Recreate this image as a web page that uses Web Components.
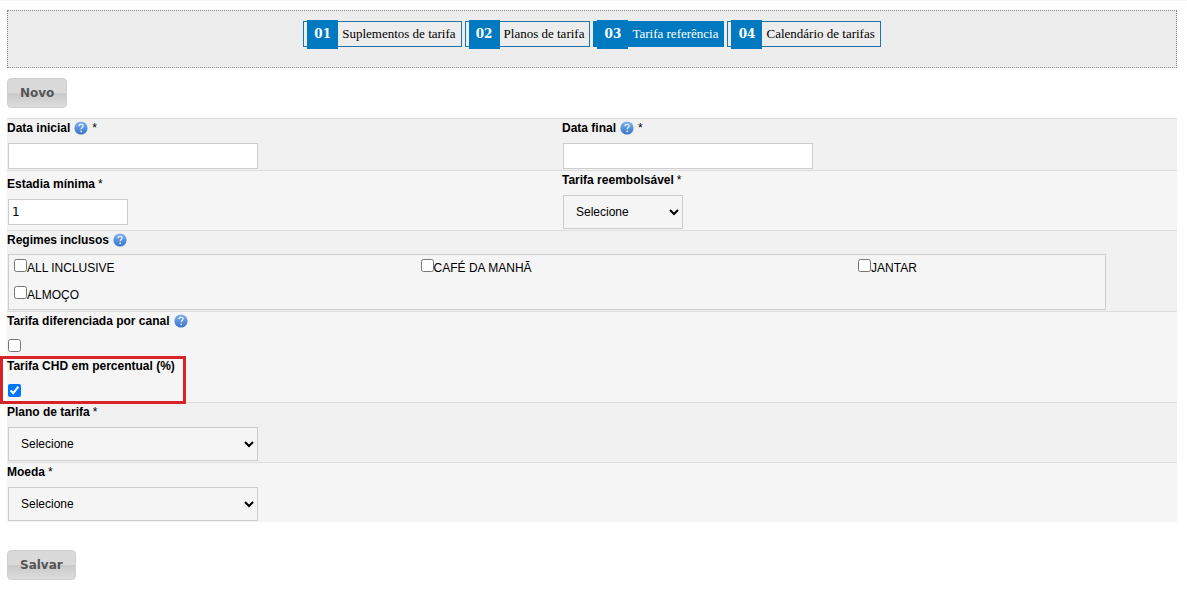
<!DOCTYPE html>
<html lang="pt-BR">
<head>
<meta charset="utf-8">
<title>Tarifa referência</title>
<style>
  body { margin: 0; background: #fff; color: #000; font: 12px/18px "Liberation Sans", Arial, sans-serif; }
</style>
</head>
<body>
<rate-page>
  <wizard-steps slot="steps">
    <wizard-step number="01">Suplementos de tarifa</wizard-step>
    <wizard-step number="02">Planos de tarifa</wizard-step>
    <wizard-step number="03" current>Tarifa referência</wizard-step>
    <wizard-step number="04">Calendário de tarifas</wizard-step>
  </wizard-steps>
  <action-button slot="top">Novo</action-button>

  <form-row shade>
    <form-field label="Data inicial" help required type="text" size="wide"></form-field>
    <form-field label="Data final" help required type="text" size="wide"></form-field>
  </form-row>
  <form-row>
    <form-field label="Estadia mínima" required type="text" value="1"></form-field>
    <form-field label="Tarifa reembolsável" required type="select"></form-field>
  </form-row>
  <form-row shade single>
    <form-field label="Regimes inclusos" help type="group" options="ALL INCLUSIVE|CAFÉ DA MANHÃ|JANTAR|ALMOÇO"></form-field>
  </form-row>
  <form-row single>
    <form-field label="Tarifa diferenciada por canal" help type="checkbox"></form-field>
    <form-field label="Tarifa CHD em percentual (%)" type="checkbox" checked highlight></form-field>
  </form-row>
  <form-row shade single>
    <form-field label="Plano de tarifa" required type="select" size="wide"></form-field>
  </form-row>
  <form-row single>
    <form-field label="Moeda" required type="select" size="wide"></form-field>
  </form-row>

  <action-button slot="bottom">Salvar</action-button>
</rate-page>

<script>
const shadow = (el, html) => { el.attachShadow({ mode: "open" }).innerHTML = html; };

customElements.define("rate-page", class extends HTMLElement {
  connectedCallback() {
    shadow(this, `
      <style>
        :host { display: block; border-top: 1px solid #f8f8f8; padding: 9px 10px 10px 7px; }
        .top { margin: 10px 0; display: flex; }
        .bottom { margin-top: 28px; display: flex; }
      </style>
      <slot name="steps"></slot>
      <div class="top"><slot name="top"></slot></div>
      <main><slot></slot></main>
      <div class="bottom"><slot name="bottom"></slot></div>`);
  }
});

customElements.define("wizard-steps", class extends HTMLElement {
  connectedCallback() {
    shadow(this, `
      <style>
        :host { display: block; background: #ededed; border: 1px dotted #888; }
        nav { display: flex; flex-wrap: wrap; justify-content: center; gap: 3px; padding: 10px 0 20px; }
      </style>
      <nav><slot></slot></nav>`);
  }
});

customElements.define("wizard-step", class extends HTMLElement {
  connectedCallback() {
    shadow(this, `
      <style>
        :host { display: block; }
        a { display: flex; align-items: center; box-sizing: border-box; height: 26px; padding: 0 5px 0 3px; gap: 4px;
            border: 1px solid #2073a8; color: #000; text-decoration: none; white-space: nowrap;
            font: 13px/24px "Liberation Serif", serif; }
        b { display: block; width: 31px; height: 29px; margin: -2px 0; background: #0079c1; color: #fff;
            text-align: center; font: bold 12px/29px "DejaVu Serif", serif; }
        :host([current]) a { background: #0079c1; border-color: #0079c1; color: #fff; }
      </style>
      <a href="#"><b>${this.getAttribute("number")}</b><slot></slot></a>`);
  }
});

customElements.define("action-button", class extends HTMLElement {
  connectedCallback() {
    shadow(this, `
      <style>
        :host { display: block; }
        button { height: 30px; padding: 0 12px; border: 1px solid #cfcfcf; border-radius: 4px; color: #555;
                 background: linear-gradient(#dadada 0 50%, #c9c9c9 50%, #dcdcdc);
                 font: bold 12px/26px "DejaVu Sans", sans-serif; }
      </style>
      <button type="button"><slot></slot></button>`);
  }
});

customElements.define("form-row", class extends HTMLElement {
  connectedCallback() {
    shadow(this, `
      <style>
        :host { display: grid; grid-template-columns: 37fr 41fr; align-items: center;
                background: #f5f5f5; border-top: 1px solid #dcdcdc; }
        :host([shade]) { background: #f1f1f1; }
        :host([single]) { grid-template-columns: 1fr; }
      </style>
      <slot></slot>`);
  }
});

customElements.define("help-icon", class extends HTMLElement {
  connectedCallback() {
    shadow(this, `
      <style>:host { display: block; height: 14px; } svg { display: block; }</style>
      <svg width="14" height="14" viewBox="0 0 14 14" role="img" aria-label="Ajuda">
        <defs><linearGradient id="g" x1="0" y1="0" x2="0" y2="1">
          <stop offset="0" stop-color="#86b4ea"/><stop offset=".5" stop-color="#5a93dc"/><stop offset="1" stop-color="#3a74c8"/>
        </linearGradient></defs>
        <circle cx="7" cy="7" r="6.6" fill="url(#g)"/>
        <path d="M5 5.3C5 3.9 5.9 3.3 7 3.3s2.1.7 2.1 1.8c0 1.4-1.9 1.6-1.9 3.2" fill="none" stroke="#e6f0fc" stroke-width="1.3"/>
        <circle cx="7.2" cy="10.3" r=".9" fill="#e6f0fc"/>
      </svg>`);
  }
});

customElements.define("form-field", class extends HTMLElement {
  control() {
    switch (this.getAttribute("type")) {
      case "select": return `<select id="c"><option>Selecione</option></select>`;
      case "checkbox": return `<input id="c" class="tick" type="checkbox" ${this.hasAttribute("checked") ? "checked" : ""}>`;
      case "group": return `<div class="group" role="group" aria-labelledby="l">${this.getAttribute("options").split("|")
        .map(o => `<label class="option"><input type="checkbox">${o}</label>`).join("")}</div>`;
      default: return `<input id="c" class="text" type="text" value="${this.getAttribute("value") || ""}">`;
    }
  }
  connectedCallback() {
    const name = this.getAttribute("label");
    const caption = this.getAttribute("type") === "group" ? `<span id="l">${name}</span>` : `<label for="c">${name}</label>`;
    shadow(this, `
      <style>
        :host { display: block; position: relative; }
        .caption { display: flex; align-items: center; height: 18px; gap: 4px; font-weight: bold; }
        .mark { font-weight: normal; }
        .caption:not(:has(help-icon)) { gap: 3px; }
        .text, select { display: block; box-sizing: border-box; width: 120px; margin: 6px 1px 1px; border: 1px solid #ccc; border-radius: 0; color: #000; }
        .text { height: 26px; padding: 0 3px; background: #fff; font: 12px "DejaVu Sans", sans-serif; }
        select { height: 34px; padding: 0 0 0 8px; background: #f5f5f5; font: 12px "Liberation Sans", sans-serif; }
        :host([size=wide]) .text, :host([size=wide]) select { width: 250px; }
        .tick { display: block; width: 13px; height: 13px; margin: 9px 1px 5px; }
        .group { display: grid; grid-template-columns: 407fr 438fr 247fr; grid-auto-rows: 27px; box-sizing: border-box;
                 width: calc(94% - 2px); margin: 5px 1px 1px; padding-left: 5px; border: 1px solid #ccc; background: #f5f5f5; }
        .option { display: flex; align-items: center; padding-bottom: 2px; }
        .option input { width: 13px; height: 13px; margin: 0 0 5px; }
        :host([highlight])::after { content: ""; position: absolute; left: -7px; top: -1px; width: 180px; height: 42px;
                 border: 3px solid #d8232a; pointer-events: none; z-index: 1; }
      </style>
      <div class="caption">${caption}${this.hasAttribute("help") ? "<help-icon></help-icon>" : ""}${this.hasAttribute("required") ? `<span class="mark">*</span>` : ""}</div>
      ${this.control()}`);
  }
});
</script>
</body>
</html>
